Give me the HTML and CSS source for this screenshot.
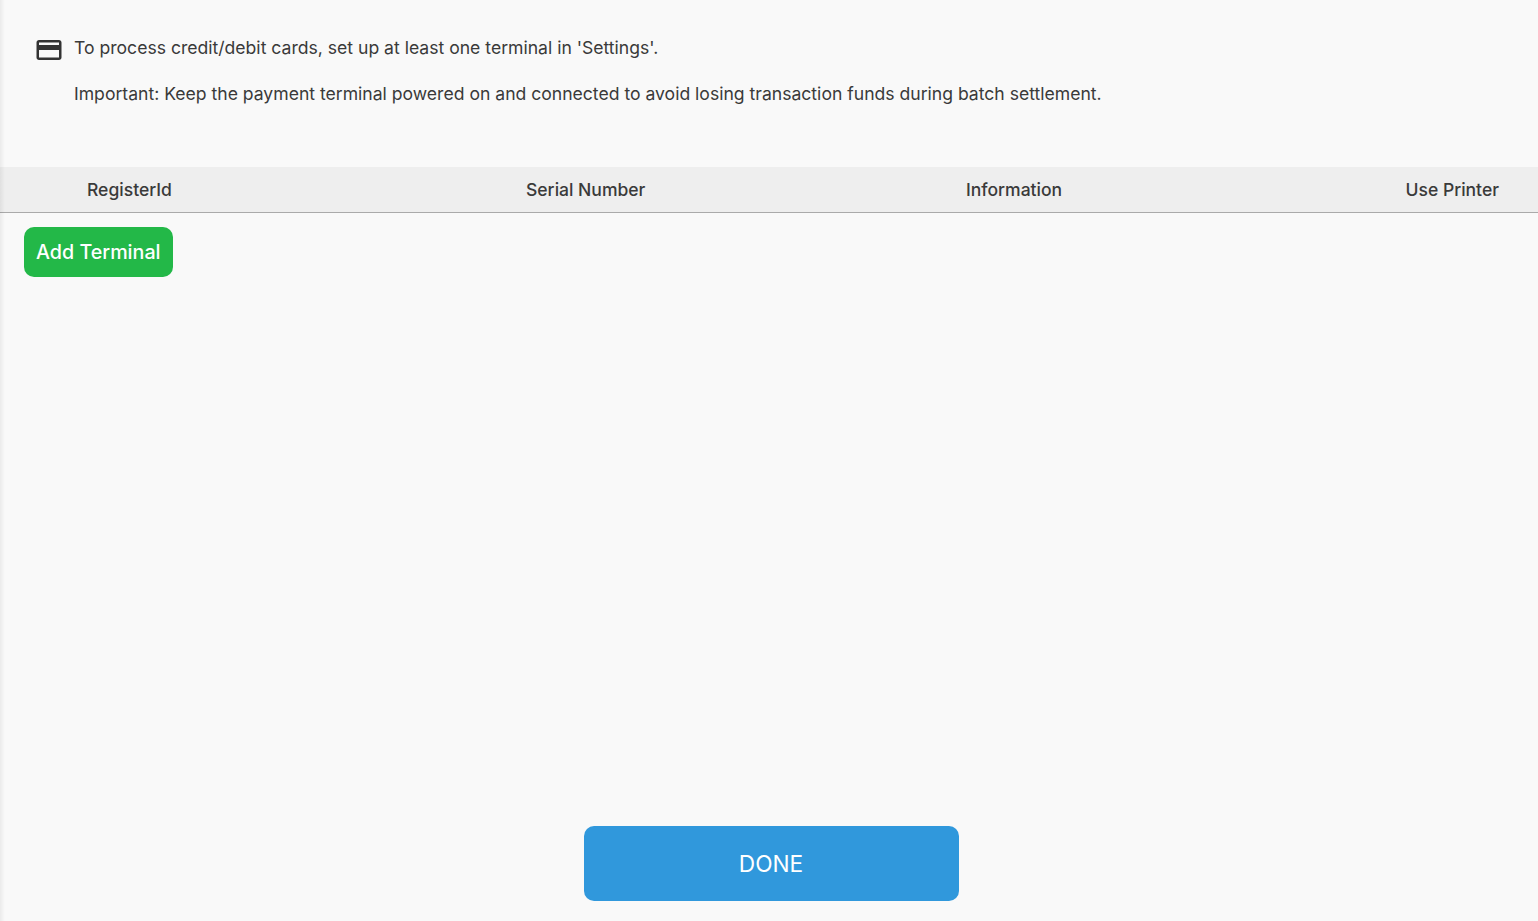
FILE: index.html
```html
<!DOCTYPE html>
<html><head>
<meta charset="utf-8">
<title>Terminals</title>
<link rel="stylesheet" href="styles.css">
</head>
<body>

<div class="page">
	<div class="notice">
		<svg class="notice-icon" viewBox="0 0 24 24"><path d="M20 4H4c-1.11 0-1.99.89-1.99 2L2 18c0 1.11.89 2 2 2h16c1.11 0 2-.89 2-2V6c0-1.11-.89-2-2-2zm0 14H4v-6h16v6zm0-10H4V6h16v2z"/></svg>
		<div class="notice-text">
			<p>To process credit/debit cards, set up at least one terminal in 'Settings'.</p>
			<p>Important: Keep the payment terminal powered on and connected to avoid losing transaction funds during batch settlement.</p>
		</div>
	</div>

	<div class="table-head">
		<div class="col-register">RegisterId</div>
		<div class="col-serial">Serial Number</div>
		<div class="col-info">Information</div>
		<div class="col-printer">Use Printer</div>
	</div>

	<div class="table-body">
		<a class="add-button">Add Terminal</a>
	</div>

	<div class="footer">
		<a class="done-button">DONE</a>
	</div>
</div>

</body>
</html>
```

FILE: styles.css
```css
html, body
{
	height: 100%;
	margin: 0;
	padding: 0;
}
body
{
	background-color: #f9f9f9;
	color: #3a3a3a;
	font-family: "Inter", "Liberation Sans", sans-serif;
	font-size: 17.58px;
	overflow: hidden;
}
.page
{
	position: relative;
	display: flex;
	flex-direction: column;
	height: 100%;
}
/* soft shadow down the left edge, over the header too */
.page::before
{
	content: "";
	position: absolute;
	top: 0;
	bottom: 0;
	left: 0;
	width: 5px;
	background: linear-gradient(to right, rgba(0, 0, 0, 0.06), rgba(0, 0, 0, 0));
}
.notice
{
	display: flex;
	height: 167px;
	box-sizing: border-box;
	padding: 35px 0 0 34px;
}
.notice-icon
{
	width: 30px;
	height: 30px;
	flex: none;
	fill: #333;
}
.notice-text
{
	margin: 2px 0 0 10px;
}
.notice-text p
{
	margin: 0 0 24px;
	line-height: 22px;
}
.table-head
{
	display: flex;
	height: 45px;
	line-height: 45px;
	background-color: #eee;
	border-bottom: 1px solid #aaa;
	font-size: 17.55px;
	font-weight: 500;
}
.col-register
{
	margin-left: 87px;
	width: 439px;
}
.col-serial
{
	width: 440px;
}
.col-info
{
	flex: 1;
}
.col-printer
{
	margin-right: 39px;
}
.table-body
{
	flex: 1;
	padding: 14px 24px;
}
.add-button
{
	display: inline-block;
	height: 50px;
	line-height: 50px;
	padding: 0 12px;
	border-radius: 10px;
	background-color: #23b848;
	color: white;
	font-size: 19.7px;
	font-weight: 500;
}
.footer
{
	display: flex;
	justify-content: center;
	padding: 0 0 20px 4px;
}
.done-button
{
	display: block;
	width: 375px;
	height: 75px;
	line-height: 75px;
	border-radius: 10px;
	background-color: #3098dc;
	color: white;
	font-size: 22.7px;
	text-align: center;
}
```
